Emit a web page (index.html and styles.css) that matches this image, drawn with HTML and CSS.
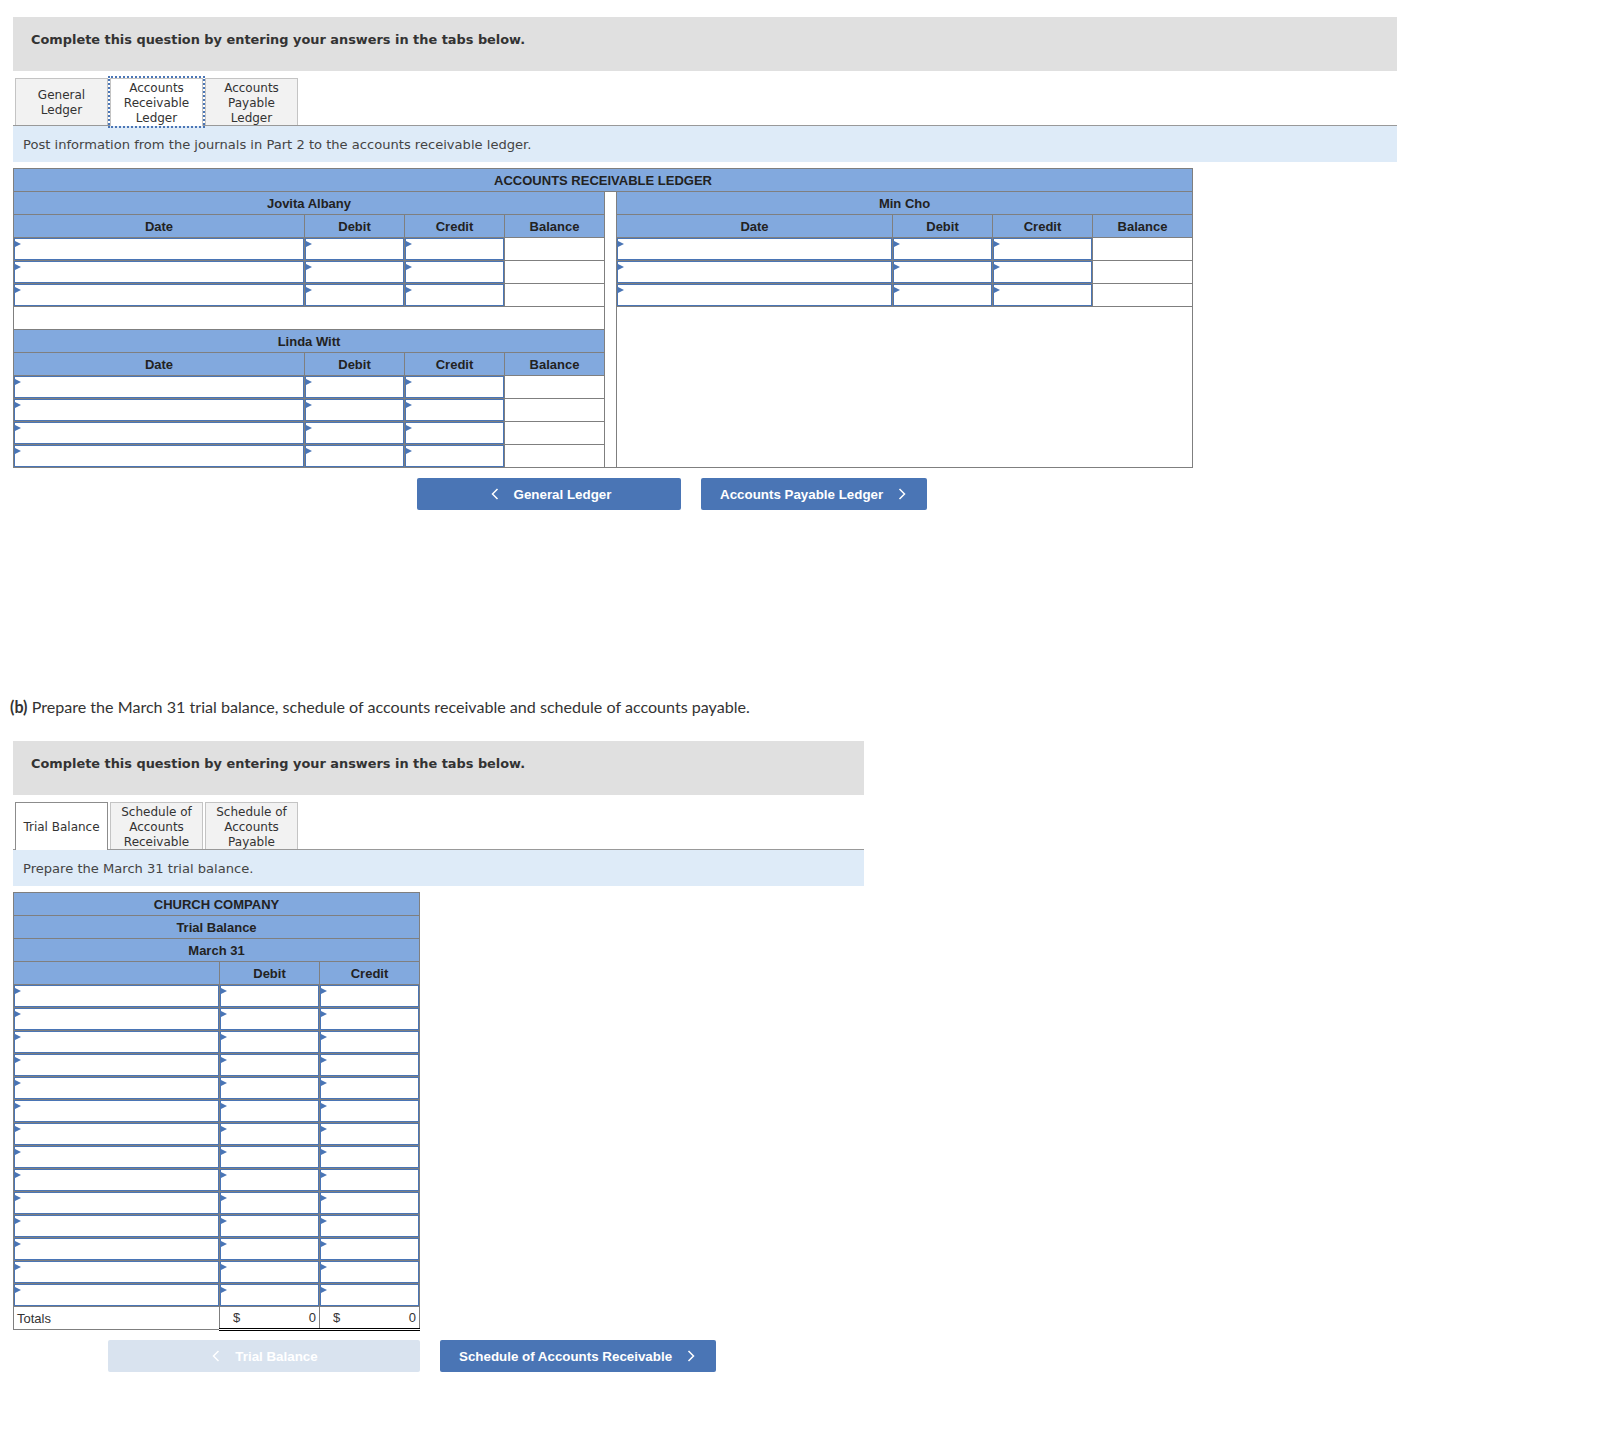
FILE: index.html
```html
<!DOCTYPE html>
<html lang="en">
<head>
    <meta charset="UTF-8">
    <title>Ledger</title>
    <link rel="stylesheet" href="styles.css">
</head>
<body>
    <section class="question question-wide">
        <div class="question-head">Complete this question by entering your answers in the tabs below.</div>
        <div class="tabs">
            <div class="tab">General<br>Ledger</div>
            <div class="tab tab-focus">Accounts<br>Receivable<br>Ledger</div>
            <div class="tab">Accounts<br>Payable<br>Ledger</div>
        </div>
        <div class="instruction">Post information from the journals in Part 2 to the accounts receivable ledger.</div>
        <table class="grid ledger">
            <colgroup>
                <col class="c-date"><col class="c-num"><col class="c-num"><col class="c-num">
                <col class="c-gap">
                <col class="c-date2"><col class="c-num"><col class="c-num"><col class="c-num">
            </colgroup>
            <tr class="head"><th colspan="9">ACCOUNTS RECEIVABLE LEDGER</th></tr>
            <tr class="head">
                <th colspan="4">Jovita Albany</th>
                <td class="gap" rowspan="12"></td>
                <th colspan="4">Min Cho</th>
            </tr>
            <tr class="head">
                <th>Date</th><th>Debit</th><th>Credit</th><th>Balance</th>
                <th>Date</th><th>Debit</th><th>Credit</th><th>Balance</th>
            </tr>
            <tr>
                <td class="entry"><input type="text"></td><td class="entry"><input type="text"></td><td class="entry"><input type="text"></td><td></td>
                <td class="entry"><input type="text"></td><td class="entry"><input type="text"></td><td class="entry"><input type="text"></td><td></td>
            </tr>
            <tr>
                <td class="entry"><input type="text"></td><td class="entry"><input type="text"></td><td class="entry"><input type="text"></td><td></td>
                <td class="entry"><input type="text"></td><td class="entry"><input type="text"></td><td class="entry"><input type="text"></td><td></td>
            </tr>
            <tr>
                <td class="entry"><input type="text"></td><td class="entry"><input type="text"></td><td class="entry"><input type="text"></td><td></td>
                <td class="entry"><input type="text"></td><td class="entry"><input type="text"></td><td class="entry"><input type="text"></td><td></td>
            </tr>
            <tr>
                <td colspan="4"></td>
                <td colspan="4" rowspan="7"></td>
            </tr>
            <tr class="head"><th colspan="4">Linda Witt</th></tr>
            <tr class="head"><th>Date</th><th>Debit</th><th>Credit</th><th>Balance</th></tr>
            <tr><td class="entry"><input type="text"></td><td class="entry"><input type="text"></td><td class="entry"><input type="text"></td><td></td></tr>
            <tr><td class="entry"><input type="text"></td><td class="entry"><input type="text"></td><td class="entry"><input type="text"></td><td></td></tr>
            <tr><td class="entry"><input type="text"></td><td class="entry"><input type="text"></td><td class="entry"><input type="text"></td><td></td></tr>
            <tr><td class="entry"><input type="text"></td><td class="entry"><input type="text"></td><td class="entry"><input type="text"></td><td></td></tr>
        </table>
        <div class="nav nav-ledger">
            <a class="btn btn-prev-ledger">
                <svg class="chev" viewBox="0 0 8 12"><path d="M6.5 1L1.5 6l5 5"/></svg>
                General Ledger
            </a>
            <a class="btn">
                Accounts Payable Ledger
                <svg class="chev" viewBox="0 0 8 12"><path d="M1.5 1l5 5-5 5"/></svg>
            </a>
        </div>
    </section>

    <p class="prompt"><b>(b)</b> Prepare the March 31 trial balance, schedule of accounts receivable and schedule of accounts payable.</p>

    <section class="question question-narrow">
        <div class="question-head">Complete this question by entering your answers in the tabs below.</div>
        <div class="tabs">
            <div class="tab tab-active">Trial Balance</div>
            <div class="tab">Schedule of<br>Accounts<br>Receivable</div>
            <div class="tab">Schedule of<br>Accounts<br>Payable</div>
        </div>
        <div class="instruction">Prepare the March 31 trial balance.</div>
        <table class="grid trial">
            <colgroup><col class="c-acct"><col class="c-num"><col class="c-num"></colgroup>
            <tr class="head"><th colspan="3">CHURCH COMPANY</th></tr>
            <tr class="head"><th colspan="3">Trial Balance</th></tr>
            <tr class="head"><th colspan="3">March 31</th></tr>
            <tr class="head"><th></th><th>Debit</th><th>Credit</th></tr>
            <tr><td class="entry"><input type="text"></td><td class="entry"><input type="text"></td><td class="entry"><input type="text"></td></tr>
            <tr><td class="entry"><input type="text"></td><td class="entry"><input type="text"></td><td class="entry"><input type="text"></td></tr>
            <tr><td class="entry"><input type="text"></td><td class="entry"><input type="text"></td><td class="entry"><input type="text"></td></tr>
            <tr><td class="entry"><input type="text"></td><td class="entry"><input type="text"></td><td class="entry"><input type="text"></td></tr>
            <tr><td class="entry"><input type="text"></td><td class="entry"><input type="text"></td><td class="entry"><input type="text"></td></tr>
            <tr><td class="entry"><input type="text"></td><td class="entry"><input type="text"></td><td class="entry"><input type="text"></td></tr>
            <tr><td class="entry"><input type="text"></td><td class="entry"><input type="text"></td><td class="entry"><input type="text"></td></tr>
            <tr><td class="entry"><input type="text"></td><td class="entry"><input type="text"></td><td class="entry"><input type="text"></td></tr>
            <tr><td class="entry"><input type="text"></td><td class="entry"><input type="text"></td><td class="entry"><input type="text"></td></tr>
            <tr><td class="entry"><input type="text"></td><td class="entry"><input type="text"></td><td class="entry"><input type="text"></td></tr>
            <tr><td class="entry"><input type="text"></td><td class="entry"><input type="text"></td><td class="entry"><input type="text"></td></tr>
            <tr><td class="entry"><input type="text"></td><td class="entry"><input type="text"></td><td class="entry"><input type="text"></td></tr>
            <tr><td class="entry"><input type="text"></td><td class="entry"><input type="text"></td><td class="entry"><input type="text"></td></tr>
            <tr><td class="entry"><input type="text"></td><td class="entry"><input type="text"></td><td class="entry"><input type="text"></td></tr>
            <tr class="totals">
                <td class="totals-label">Totals</td>
                <td class="amount"><div class="amount-inner"><span>$</span><span>0</span></div></td>
                <td class="amount"><div class="amount-inner"><span>$</span><span>0</span></div></td>
            </tr>
        </table>
        <div class="nav nav-trial">
            <a class="btn btn-disabled">
                <svg class="chev" viewBox="0 0 8 12"><path d="M6.5 1L1.5 6l5 5"/></svg>
                Trial Balance
            </a>
            <a class="btn">
                Schedule of Accounts Receivable
                <svg class="chev" viewBox="0 0 8 12"><path d="M1.5 1l5 5-5 5"/></svg>
            </a>
        </div>
    </section>
</body>
</html>
```

FILE: styles.css
```css
:root {
    --head-blue: #82a9de;
    --entry-blue: #4a75b5;
    --line: #7f7f7f;
    --text: #222222;
}

body {
    margin: 0;
    padding: 17px 0 0 13px;
    background-color: #ffffff;
    color: var(--text);
    font-family: "Liberation Sans", Arial, sans-serif;
}

.question-wide {
    width: 1384px;
}

.question-narrow {
    width: 851px;
    margin-top: 24px;
}

.question-head {
    height: 54px;
    box-sizing: border-box;
    padding: 14px 18px;
    background-color: #e0e0e0;
    font-family: "DejaVu Sans", Verdana, sans-serif;
    font-size: 12.9px;
    font-weight: bold;
    line-height: 18px;
    color: #333333;
}

.tabs {
    display: flex;
    gap: 2px;
    height: 48px;
    box-sizing: border-box;
    margin-top: 7px;
    padding-left: 2px;
    border-bottom: 1px solid #999999;
}

.tab {
    display: flex;
    align-items: center;
    justify-content: center;
    width: 93px;
    height: 47px;
    box-sizing: border-box;
    padding-top: 2px;
    background-color: #f2f2f2;
    border: 1px solid #c4c4c4;
    border-bottom: none;
    font-family: "DejaVu Sans", Verdana, sans-serif;
    font-size: 12px;
    line-height: 15px;
    text-align: center;
    color: #333333;
}

.tab-focus {
    height: 48px;
    padding-top: 1px;
    background-color: #ffffff;
    outline: 2px dotted var(--entry-blue);
    outline-offset: 0;
}

.tab-active {
    height: 48px;
    padding-top: 1px;
    background-color: #ffffff;
    border-color: #8c8c8c;
}

.instruction {
    height: 36px;
    box-sizing: border-box;
    padding: 1px 10px 0;
    background-color: #deebf8;
    font-family: "DejaVu Sans", Verdana, sans-serif;
    font-size: 13.08px;
    line-height: 36px;
    color: #444444;
}

.grid {
    margin-top: 6px;
    border-collapse: collapse;
    table-layout: fixed;
    font-size: 13px;
}

.grid tr {
    height: 23px;
}

.grid th,
.grid td {
    padding: 0;
    border: 1px solid var(--line);
    background-color: #ffffff;
}

.grid th {
    background-color: var(--head-blue);
    font-weight: bold;
    text-align: center;
}

.ledger {
    width: 1179px;
}

.trial {
    width: 406px;
}

.c-date {
    width: 291px;
}

.c-num {
    width: 100px;
}

.c-gap {
    width: 12px;
}

.c-date2 {
    width: 276px;
}

.c-acct {
    width: 206px;
}

.grid .entry {
    position: relative;
    height: 22px;
}

.entry::before {
    content: "";
    position: absolute;
    top: 2.5px;
    left: 1px;
    border-style: solid;
    border-width: 3px 0 3px 6px;
    border-color: transparent transparent transparent var(--entry-blue);
}

.entry input {
    display: block;
    width: 100%;
    height: 22px;
    box-sizing: border-box;
    margin: 0;
    padding: 0;
    border: 1px solid var(--entry-blue);
    border-radius: 0;
    background-color: #ffffff;
    outline: none;
}

.grid .totals-label {
    padding-left: 3px;
    color: #333333;
}

.grid .amount {
    border-top: 1px solid #000000;
    border-bottom: 3px double #000000;
    border-left: 1px solid var(--line);
}

.amount-inner {
    display: flex;
    justify-content: space-between;
    padding: 0 3px 0 13px;
    color: #333333;
}

.nav {
    display: flex;
    gap: 20px;
    margin-top: 10px;
}

.nav-ledger {
    padding-left: 404px;
}

.nav-trial {
    margin-top: 9px;
    padding-left: 95px;
}

.btn {
    display: flex;
    align-items: center;
    justify-content: center;
    gap: 15px;
    height: 32px;
    box-sizing: border-box;
    padding: 0 21px 0 19px;
    border-radius: 2px;
    background-color: var(--entry-blue);
    color: #ffffff;
    font-size: 13.35px;
    font-weight: bold;
}

.btn-prev-ledger {
    width: 264px;
    padding: 0 19px 0 23px;
}

.btn-disabled {
    width: 312px;
    padding: 0 19px 0 21px;
    background-color: #d9e3ef;
}

.chev {
    width: 8px;
    height: 12px;
    fill: none;
    stroke: currentColor;
    stroke-width: 1.5;
}

.prompt {
    margin: 187px 0 0 -3px;
    font-family: Lato, sans-serif;
    font-size: 16.1px;
    line-height: 20px;
    color: #333333;
}
```
